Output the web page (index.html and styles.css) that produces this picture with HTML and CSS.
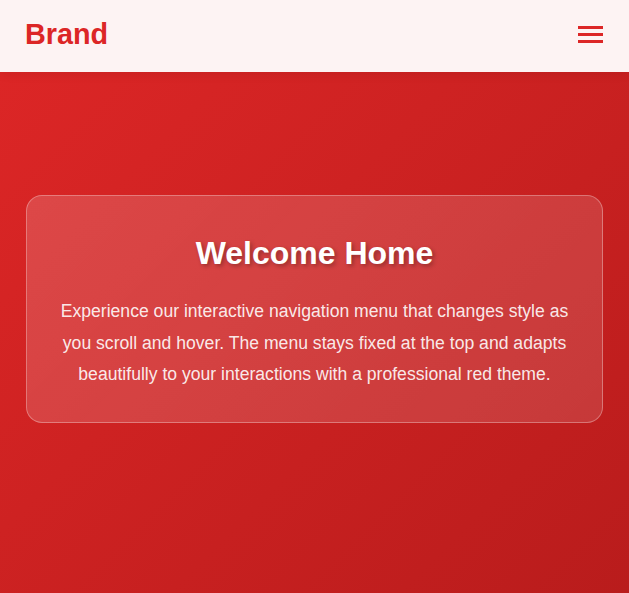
FILE: index.html
```html
<!DOCTYPE html>
<html lang="en">
<head>
<meta charset="utf-8">
<title>Welcome Home</title>
<link rel="stylesheet" href="styles.css">
</head>
<body>
<header class="navbar">
  <div class="brand">Brand</div>
  <button class="menu-toggle" aria-label="Menu">
    <span class="bar"></span>
    <span class="bar"></span>
    <span class="bar"></span>
  </button>
</header>
<main class="hero">
  <section class="card">
    <h1 class="card-title">Welcome Home</h1>
    <p class="card-text">Experience our interactive navigation menu that changes style as you scroll and hover. The menu stays fixed at the top and adapts beautifully to your interactions with a professional red theme.</p>
  </section>
</main>
</body>
</html>
```
FILE: styles.css
```css
* { box-sizing: border-box; }
html, body { margin: 0; padding: 0; }
body {
  font-family: "Liberation Sans", Arial, sans-serif;
  background: #b91c1c;
  overflow: hidden;
}
.navbar {
  height: 72px;
  display: flex;
  justify-content: space-between;
  align-items: flex-start;
  padding: 18px 26px 0 25px;
  background: #fdf3f3;
  box-shadow: 0 2px 10px rgba(0, 0, 0, 0.08);
  position: relative;
  z-index: 2;
}
.brand {
  font-size: 28.8px;
  font-weight: 700;
  color: #dc2626;
}
.menu-toggle {
  margin-top: 8px;
  padding: 0;
  border: 0;
  background: none;
  display: flex;
  flex-direction: column;
  gap: 4px;
  width: 25px;
}
.bar {
  display: block;
  width: 25px;
  height: 3px;
  background: #dc2626;
}
.hero {
  min-height: 521px;
  padding: 123px 26px 0 26px;
  background: linear-gradient(135deg, #dc2626 0%, #b91c1c 100%);
}
.card {
  padding: 39px 30px 31px;
  border: 1px solid rgba(255, 255, 255, 0.3);
  border-radius: 16px;
  background: linear-gradient(135deg, rgba(255, 255, 255, 0.16), rgba(255, 255, 255, 0.12));
  text-align: center;
}
.card-title {
  margin: 0 0 24px;
  font-size: 32px;
  font-weight: 700;
  line-height: normal;
  color: #ffffff;
  text-shadow: 2px 2px 4px rgba(0, 0, 0, 0.3);
}
.card-text {
  margin: 0;
  font-size: 17.6px;
  line-height: 1.8;
  color: rgba(255, 255, 255, 0.9);
}
```
